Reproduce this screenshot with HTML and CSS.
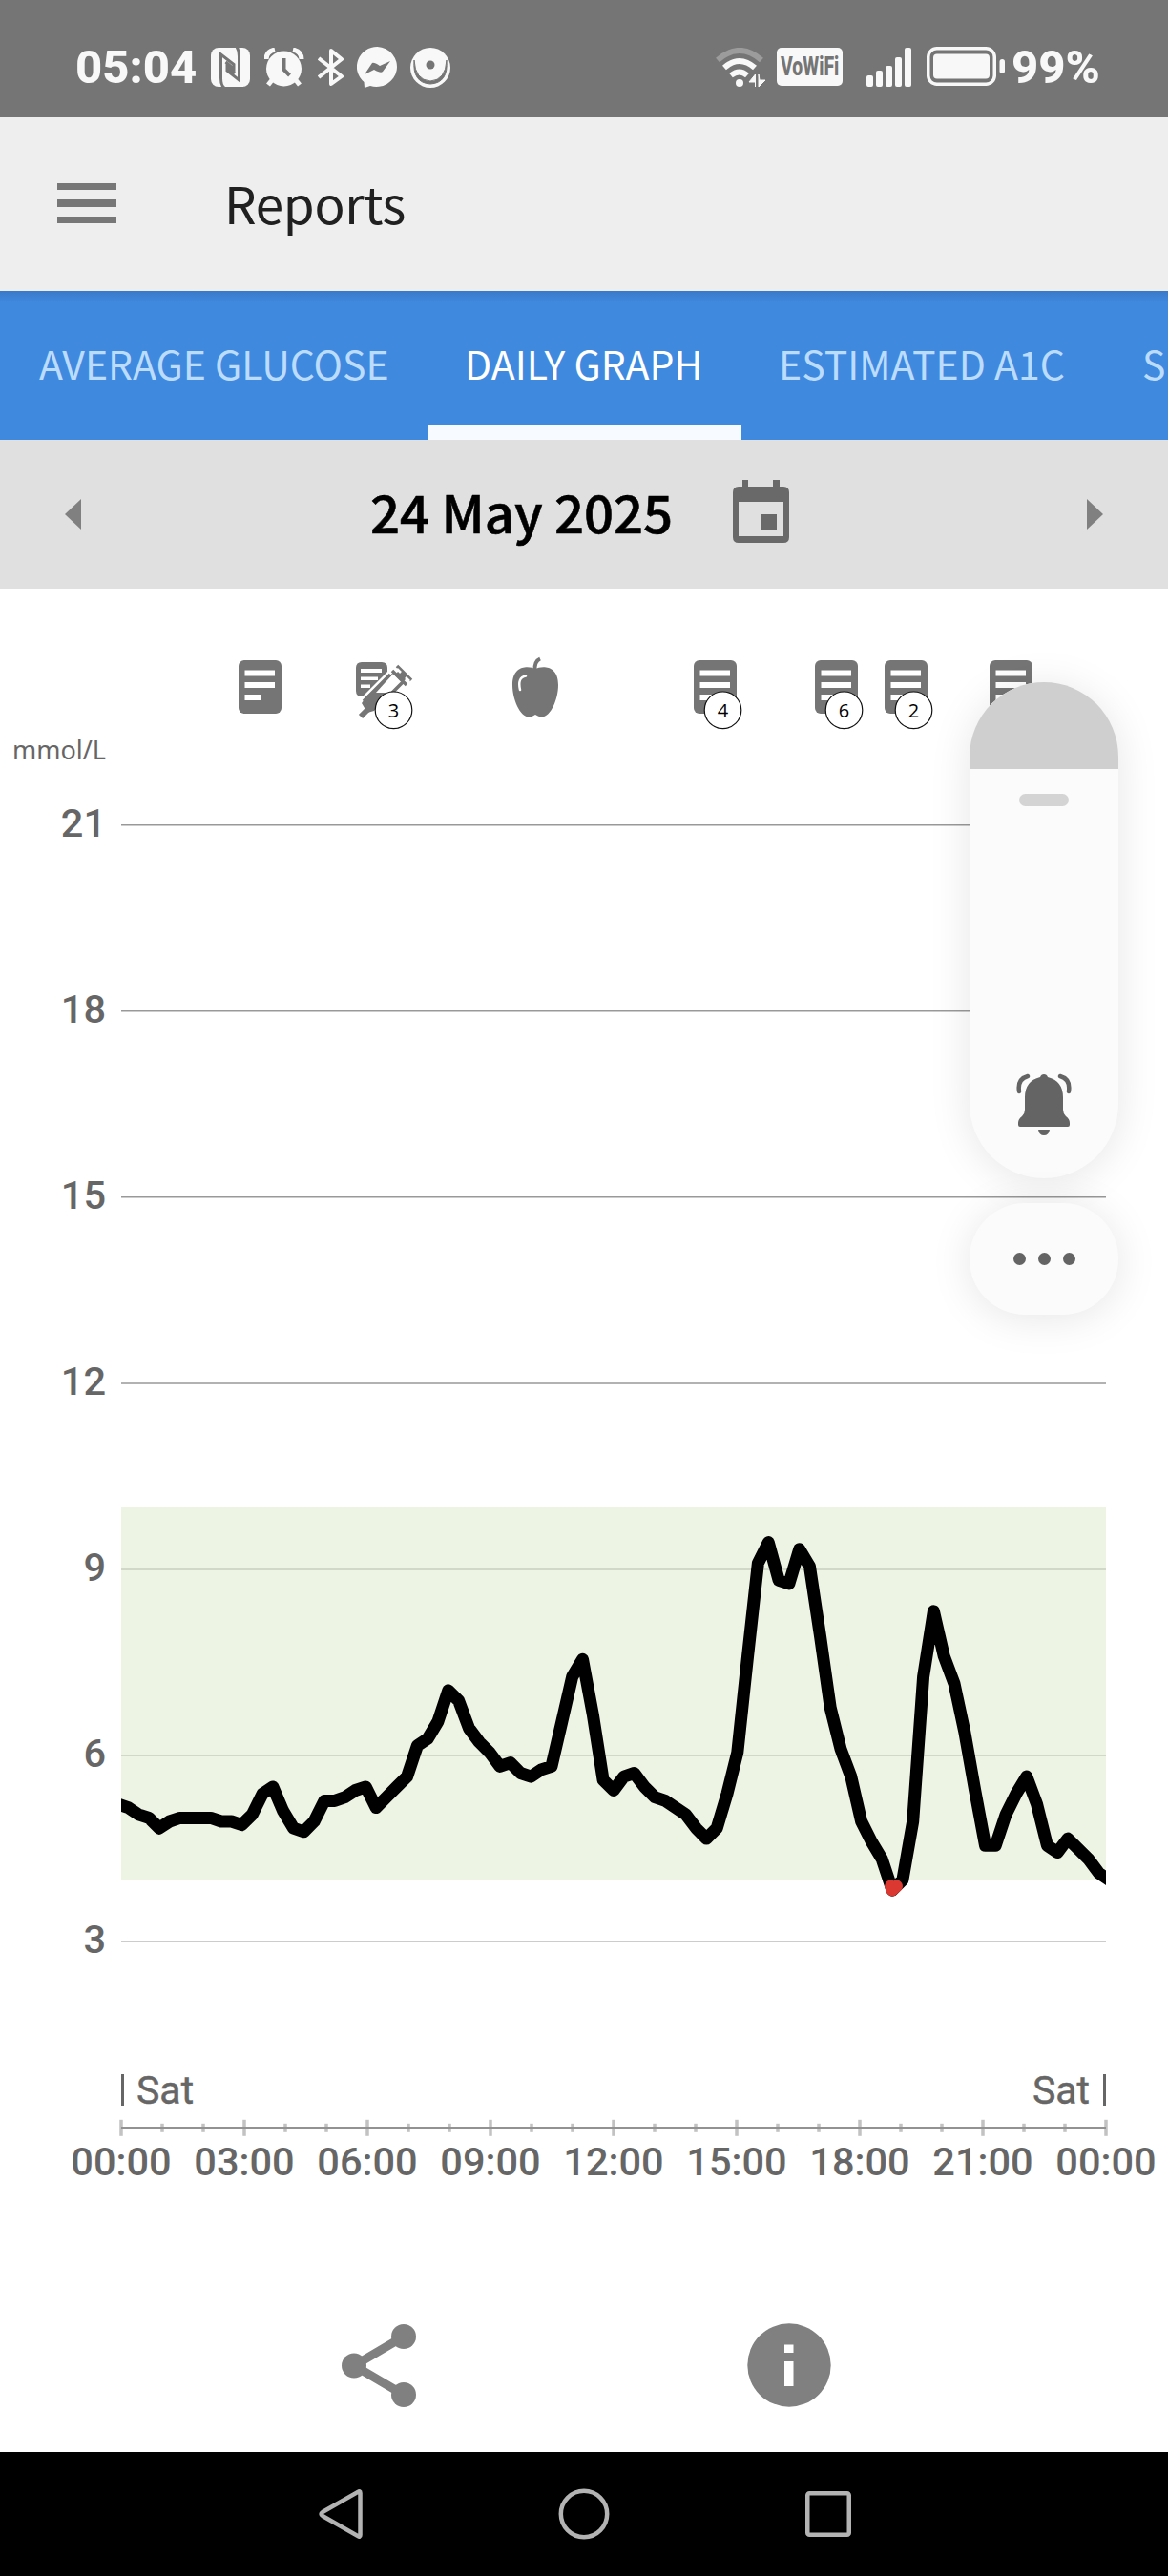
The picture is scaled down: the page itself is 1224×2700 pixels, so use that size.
FILE: index.html
```
<!DOCTYPE html>
<html lang="en">
<head>
  <meta charset="UTF-8" />
  <title>Reports</title>
  <link rel="stylesheet" href="styles.css">
</head>
<body>

  <div class="status">
    <span class="time">05:04</span>
    <svg class="nfc" width="41" height="41" viewBox="0 0 41 41">
      <rect width="41" height="41" rx="8" fill="#f8f8f8"/>
      <path d="M14 42C11 40 10.500 37 10.500 32V7L24 17.500V22L15.500 15M27 -1C29 2 29.500 5 29.500 9V34L17 24V20L25 27" fill="none" stroke="#757575" stroke-width="3"/>
    </svg>
    <svg class="alarm" width="42" height="41" viewBox="0 0 42 41">
      <circle cx="20.500" cy="22" r="18.500" fill="#f8f8f8"/>
      <path d="M2 12Q2 4 11 2M39 12Q39 4 30 2" fill="none" stroke="#f8f8f8" stroke-width="5"/>
      <path d="M8 34L4 39M33 34L37 39" stroke="#f8f8f8" stroke-width="5"/>
      <path d="M20.500 11V23L26.500 29" fill="none" stroke="#757575" stroke-width="4"/>
    </svg>
    <svg class="bt" width="28" height="42" viewBox="0 0 28 42">
      <path d="M1 11L25 30L14 38V3L25 12L1 31" fill="none" stroke="#f8f8f8" stroke-width="4" stroke-linejoin="round"/>
    </svg>
    <svg class="chat" width="43" height="43" viewBox="0 0 43 43">
      <path d="M21.500 0A21.500 21 0 1 1 14 41L8 43L7.500 37A21.500 21 0 0 1 21.500 0Z" fill="#f8f8f8"/>
      <path d="M8 29L16 17Q18 16 24 20L35 15L27 26Q25 28 18 24Z" fill="#757575"/>
    </svg>
    <svg class="sensor" width="42" height="42" viewBox="0 0 42 42">
      <circle cx="21" cy="21" r="21" fill="#f8f8f8"/>
      <path d="M4 13Q2 37 21 38Q40 37 38 13Q37 34 21 35Q5 34 4 13Z" fill="#757575" stroke="#757575"/>
      <circle cx="21" cy="18" r="4.500" fill="#757575"/>
    </svg>

    <svg class="wifi" width="54" height="42" viewBox="0 0 54 42" fill="none">
      <path d="M3 13Q26 -7 49 13" stroke="#9c9c9c" stroke-width="6"/>
      <path d="M10 21Q26 7 42 21" stroke="#f8f8f8" stroke-width="6"/>
      <path d="M17 29Q26 22 34 29" stroke="#f8f8f8" stroke-width="6"/>
      <circle cx="26" cy="37" r="4" fill="#f8f8f8"/>
      <path d="M42.500 41V36H36L42.500 28ZM46 28V41L53 34H47Z" fill="#f8f8f8" stroke="#f8f8f8"/>
    </svg>
    <span class="vowifi"><span>VoWiFi</span></span>
    <svg class="signal" width="48" height="41" viewBox="0 0 48 41" fill="#f8f8f8">
      <rect x="0" y="29" width="7" height="12" rx="2"/>
      <rect x="10" y="24" width="7" height="17" rx="2"/>
      <rect x="20" y="19" width="7" height="22" rx="2"/>
      <rect x="30" y="10" width="7" height="31" rx="2"/>
      <rect x="40" y="0" width="7" height="41" rx="2"/>
    </svg>
    <svg class="battery" width="83" height="41" viewBox="0 0 83 41">
      <rect x="1.750" y="1.750" width="69.500" height="37.500" rx="9" fill="none" stroke="#f8f8f8" stroke-width="3.500"/>
      <rect x="7" y="7.500" width="59" height="26" rx="4" fill="#f8f8f8"/>
      <rect x="76.500" y="13" width="5.500" height="15" rx="2.700" fill="#f8f8f8"/>
    </svg>
    <span class="percent">99%</span>
  </div>

  <div class="header">
    <div class="menu"><i></i><i></i><i></i></div>
    <div class="title">Reports</div>
  </div>

  <div class="tabs">
    <div class="tab average">AVERAGE GLUCOSE</div>
    <div class="tab active">DAILY GRAPH</div>
    <div class="tab estimated">ESTIMATED A1C</div>
    <div class="tab">S</div>
  </div>

  <div class="datebar">
    <svg class="prev" width="17" height="32" viewBox="0 0 17 32"><path d="M17 0V32L0 16Z" fill="#808080"/></svg>
    <div class="date">24 May 2025</div>
    <svg class="cal" width="59" height="66" viewBox="0 0 59 66" fill="#696969">
      <path fill-rule="evenodd" d="M10 0H16V7H42V0H49V7H53Q59 7 59 13V60Q59 66 53 66H6Q0 66 0 60V13Q0 7 6 7H10ZM6 23V59H53V23Z"/>
      <rect x="29" y="36" width="17" height="16"/>
    </svg>
    <svg class="next" width="17" height="32" viewBox="0 0 17 32"><path d="M0 0V32L17 16Z" fill="#808080"/></svg>
  </div>

  <div class="report">
    <svg id="chart" width="1224" height="1753" viewBox="0 617 1224 1753">
      <defs>
        <symbol id="note" width="45" height="56" viewBox="0 0 45 56">
          <rect width="45" height="56" rx="6" fill="#757575"/>
          <path d="M6.500 10.500H38V16.500H6.500ZM6.500 23H38V29H6.500ZM6.500 36H23V42H6.500Z" fill="#fff"/>
        </symbol>
        <clipPath id="plot"><rect x="127" y="700" width="1032" height="1500"/></clipPath>
      </defs>
      <g id="grid"></g>
      <rect class="target" x="127" y="1580" width="1032" height="390"/>
      <g clip-path="url(#plot)">
        <polyline id="line" class="line"/>
        <path class="line low" d="M933.600 1977L935 1981L939.500 1977"/>
      </g>

      <use href="#note" x="250" y="692"/>
      <g>
        <path d="M379 694H400Q406 694 406 700V704L380 730H379Q373 730 373 724V700Q373 694 379 694Z" fill="#757575"/>
        <path d="M378 701H400V705H378ZM378 709.500H396V713H378ZM378 717.500H388V721H378Z" fill="#fff"/>
        <path d="M413 704L421 713L400 735L392 745L385 747L379 737L384 730Z" fill="#757575"/>
        <path d="M412 706L423 717L413 726L394 726Z" fill="#fff"/>
        <path d="M411 703L426 718M416 698L431 713M381 735L409 707M411 726L422 715" stroke="#757575" stroke-width="3.500" fill="none"/>
        <path d="M414 707L420 701L428 709L422 715Z" fill="#757575"/>
        <path d="M416 701L420 705M425 710L429 714" stroke="#fff" stroke-width="2.500"/>
        <path d="M378 751L390 739" stroke="#757575" stroke-width="6"/>
      </g>
      <g>
        <path d="M561 701C567 698 585 696 585 718C585 733 577 751 568 751.500Q564 751 561 749Q558 751 554 751.500C545 751 537 733 537 718C537 696 555 698 561 701Z" fill="#757575"/>
        <path d="M560.500 703Q560 693 566 690.500" fill="none" stroke="#757575" stroke-width="4"/>
        <path d="M545 723Q542 710 551 708.500" fill="none" stroke="#fff" stroke-width="2.500" stroke-linecap="round"/>
      </g>
      <use href="#note" x="727" y="692"/>
      <use href="#note" x="854" y="692"/>
      <use href="#note" x="927" y="692"/>
      <use href="#note" x="1037" y="692"/>
      <g class="badge">
        <circle cx="412.500" cy="744.300" r="19.300"/><text x="412.500" y="752">3</text>
        <circle cx="757.500" cy="744.300" r="19.300"/><text x="757.500" y="752">4</text>
        <circle cx="884.500" cy="744.300" r="19.300"/><text x="884.500" y="752">6</text>
        <circle cx="957.500" cy="744.300" r="19.300"/><text x="957.500" y="752">2</text>
      </g>

      <text class="unit" x="111" y="796">mmol/L</text>
      <rect class="day" x="127" y="2174" width="3" height="33"/>
      <text class="label sat" x="143" y="2205">Sat</text>
      <rect class="day" x="1156" y="2174" width="3" height="33"/>
      <text class="label sat end" x="1142" y="2205">Sat</text>
    </svg>

    <div class="actions">
      <svg width="78" height="88" viewBox="0 0 78 88">
        <path d="M65 14L13 44.500L65 75" fill="none" stroke="#808080" stroke-width="9"/>
        <circle cx="65" cy="14" r="13" fill="#808080"/>
        <circle cx="13" cy="44.500" r="13" fill="#808080"/>
        <circle cx="65" cy="75" r="13" fill="#808080"/>
      </svg>
      <svg width="88" height="88" viewBox="0 0 88 88">
        <circle cx="44" cy="44" r="43.700" fill="#808080"/>
        <path d="M39 22.500H48.500V31H39ZM39 40H48.500V66H39Z" fill="#fff"/>
      </svg>
    </div>

    <div class="volume">
      <div class="level"></div>
      <div class="handle"></div>
      <svg class="bell" width="58" height="66" viewBox="0 0 58 66">
        <path d="M25 4Q26 1 29 1Q32 1 33 4Q49 8 49 25V38Q49 42 52 45Q56 48 56 52V54Q56 56 54 56H4Q2 56 2 54V52Q2 48 6 45Q9 42 9 38V25Q9 8 25 4Z" fill="#646464"/>
        <path d="M23 59H35Q34 65 29 65Q24 65 23 59Z" fill="#646464"/>
        <path d="M3 19Q1 6 12 3M55 19Q57 6 46 3" fill="none" stroke="#646464" stroke-width="4.500" stroke-linecap="round"/>
      </svg>
    </div>
    <div class="more"><i></i><i></i><i></i></div>
  </div>

  <div class="nav">
    <svg width="46" height="54" viewBox="0 0 46 54"><path d="M41 4Q43.500 2 43.500 5V49Q43.500 52 41 50L4 29Q1 27 4 25Z"/></svg>
    <svg width="54" height="54" viewBox="0 0 54 54"><circle cx="27" cy="27" r="24.200"/></svg>
    <svg width="48" height="48" viewBox="0 0 48 48"><rect x="2.250" y="2.250" width="43.500" height="43.500" rx="2"/></svg>
  </div>

  <script>
    // readings in mg/dL, one every 15 minutes
    const readings = [
      94, 93, 91, 90, 87, 89, 90, 90, 90, 90, 89, 89, 88, 91, 97, 99,
      92, 87, 86, 89, 95, 95, 96, 98, 99, 93, 96, 99, 102, 111, 113, 118,
      127, 124, 116, 112, 109, 105, 106, 103, 102, 104, 105, 118, 131, 136, 120, 101,
      98, 102, 103, 99, 96, 95, 93, 91, 87, 84, 87, 97, 109, 137, 164, 170,
      159, 158, 168, 163, 143, 122, 110, 102, 89, 83, 78, 69, 72, 89, 131, 150,
      137, 129, 115, 98, 82, 82, 91, 97, 102, 94, 82, 80, 84, 81, 78, 74, 72
    ];
    const left = 127, right = 1159, base = 2230.3;

    document.getElementById('line').setAttribute('points',
      readings.map((v, i) => `${(123.6 + i * 10.82).toFixed(1)},${(base - v * 3.61).toFixed(1)}`).join(' '));

    let html = '';
    for (let v = 3; v <= 21; v += 3) {
      const y = base - v * 65.03;
      html += `<line class="rule" x1="${left}" x2="${right}" y1="${y}" y2="${y}"/>
        <text class="label end" x="111" y="${y + 12}">${v}</text>`;
    }
    for (let h = 0; h <= 24; h++) {
      const x = left + h * 43;
      const len = h % 3 ? 4.5 : 8.5;
      html += `<line class="tick" x1="${x}" x2="${x}" y1="${base - len}" y2="${base + len}"/>`;
      if (h % 3 === 0) {
        html += `<text class="label mid" x="${x}" y="2280">${String(h % 24).padStart(2, '0')}:00</text>`;
      }
    }
    html += `<line class="axis" x1="${left}" x2="${right}" y1="${base}" y2="${base}"/>`;
    document.getElementById('grid').innerHTML = html;
  </script>

</body>
</html>
```
FILE: styles.css
```
body {
  margin: 0;
  width: 1224px;
  height: 2700px;
  overflow: hidden;
  background-color: #fff;
  font-family: "Noto Sans CJK SC", "Noto Sans", sans-serif;
}
svg {
  display: block;
  flex: none;
}

/* status bar */
.status {
  display: flex;
  height: 123px;
  box-sizing: border-box;
  padding: 50px 0 0 79px;
  background-color: #757575;
  color: #f8f8f8;
  font-family: Roboto, sans-serif;
}
.time, .percent {
  font-size: 49px;
  font-weight: 800;
  line-height: 42px;
}
.time {
  width: 142px;
}
.alarm {
  margin-left: 15px;
}
.bt {
  margin-left: 14px;
}
.chat {
  margin: -1px 0 0 13px;
}
.sensor {
  margin-left: 13px;
}
.wifi {
  margin-left: 277px;
}
.vowifi {
  display: flex;
  justify-content: center;
  align-items: center;
  width: 69px;
  height: 40px;
  margin-left: 11px;
  border-radius: 5px;
  background-color: #f8f8f8;
  color: #757575;
  font-size: 27px;
  font-weight: 800;
}
.vowifi span {
  transform: scaleX(.72);
}
.signal {
  margin-left: 25px;
}
.battery {
  margin: -1px 0 0 15px;
}
.percent {
  margin-left: 6px;
}

/* header */
.header {
  display: flex;
  align-items: center;
  height: 182px;
  padding-left: 60px;
  background-color: #eee;
}
.menu {
  display: flex;
  flex-direction: column;
  gap: 10px;
  width: 62px;
  margin: 0 113px 2px 0;
}
.menu i {
  height: 7.500px;
  background-color: #777;
}
.title {
  padding-bottom: 5px;
  color: #202020;
  font-size: 53px;
  letter-spacing: -.3px;
  line-height: 80px;
}

/* tabs */
.tabs {
  display: flex;
  height: 156px;
  background: linear-gradient(#3b79c9, #3f89df 12px);
  overflow: hidden;
}
.tab {
  flex: none;
  box-sizing: border-box;
  height: 156px;
  padding: 0 41px;
  color: #bbdcfd;
  font-size: 41px;
  line-height: 151px;
  white-space: nowrap;
}
.average {
  width: 448px;
}
.tab.active {
  width: 329px;
  padding: 0 39px;
  color: #fff;
  border-bottom: 16px solid #f7fbff;
}
.estimated {
  width: 379px;
  padding: 0 39px;
}

/* date */
.datebar {
  display: flex;
  align-items: center;
  height: 156px;
  background-color: #e0e0e0;
}
.prev {
  margin-left: 68px;
}
.date {
  width: 380px;
  margin-left: 303px;
  padding-bottom: 6px;
  font-size: 54.500px;
  font-weight: 500;
  line-height: 80px;
  white-space: nowrap;
  color: #000;
  -webkit-text-stroke: .6px #000;
}
.cal {
  margin-top: -6px;
}
.next {
  margin-left: 312px;
}

/* graph */
.report {
  position: relative;
  height: 1953px;
}
.rule {
  stroke: #999;
  stroke-width: 1.500;
}
.target {
  fill: rgb(228, 238, 212);
  fill-opacity: .63;
}
.line {
  fill: none;
  stroke: #000;
  stroke-width: 13px;
  stroke-linejoin: round;
  stroke-linecap: round;
}
.low {
  stroke: #db3832;
}
.tick {
  stroke: #c2c2c2;
  stroke-width: 3.500;
}
.axis {
  stroke: #929292;
  stroke-width: 2.500;
}
.label {
  font-family: Roboto, sans-serif;
  font-size: 41.500px;
  font-weight: 500;
  fill: #666;
}
.sat {
  font-size: 41px;
  font-weight: 400;
  stroke: #666;
  stroke-width: .5px;
}
.end {
  text-anchor: end;
}
.mid {
  text-anchor: middle;
}
.day {
  fill: #666;
}
.unit {
  font-family: "Noto Sans", sans-serif;
  font-size: 27px;
  text-anchor: end;
  fill: #666;
}
.badge circle {
  fill: #fff;
  stroke: #111;
  stroke-width: 1.200;
}
.badge text {
  font-family: "Open Sans", sans-serif;
  font-size: 20px;
  text-anchor: middle;
}
.actions {
  display: flex;
  gap: 347px;
  padding: 65px 0 0 358px;
}

/* volume overlay */
.volume, .more {
  position: absolute;
  left: 1016px;
  width: 156px;
  background-color: #fbfbfb;
  box-shadow: 0 4px 44px rgba(0, 0, 0, .1);
}
.volume {
  top: 98px;
  height: 520px;
  border-radius: 78px;
  overflow: hidden;
}
.level {
  height: 91px;
  background-color: #cfcfcf;
}
.handle {
  width: 52px;
  height: 13px;
  margin: 26px auto 280px;
  border-radius: 7px;
  background-color: #d4d4d4;
}
.bell {
  margin: 0 auto;
}
.more {
  display: flex;
  justify-content: center;
  align-items: center;
  gap: 13px;
  top: 644px;
  height: 117px;
  border-radius: 58px;
}
.more i {
  width: 13px;
  height: 13px;
  border-radius: 50%;
  background-color: #646464;
}

/* navigation */
.nav {
  display: flex;
  align-items: center;
  height: 130px;
  padding-left: 334px;
  background-color: #000;
}
.nav svg {
  fill: none;
  stroke: #b3b3b3;
  stroke-width: 4.500;
}
.nav svg + svg {
  margin-left: 205px;
}
```
